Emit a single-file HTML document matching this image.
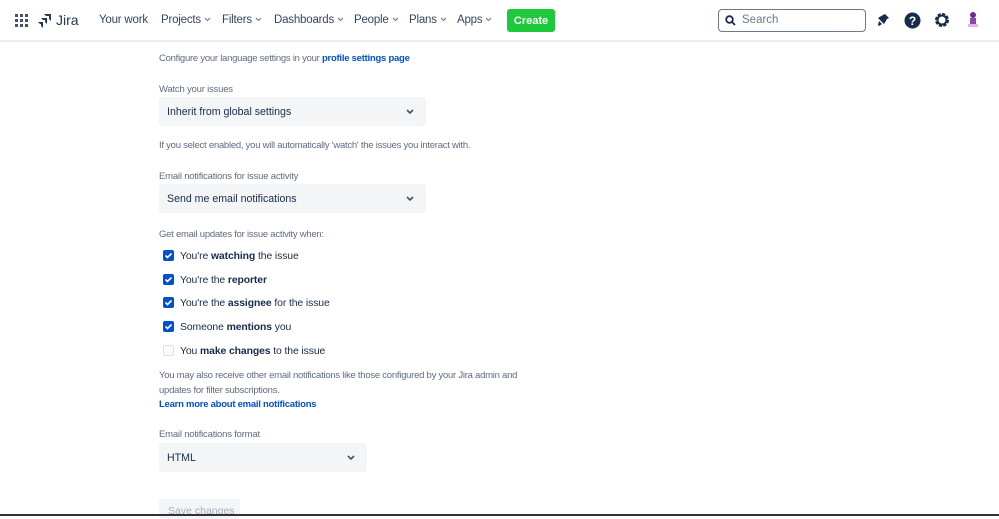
<!DOCTYPE html>
<html><head><style>
*{box-sizing:border-box;margin:0;padding:0}
body{width:999px;height:516px;overflow:hidden;background:#fff;font-family:"Liberation Sans",sans-serif;color:#172b4d;position:relative}
.hdr{position:absolute;left:0;top:0;width:999px;height:42px;border-bottom:2px solid #ebecf0;background:#fff}
.a{position:absolute;white-space:nowrap}
.nav{font-size:11.5px;letter-spacing:-0.2px;color:#344563;top:14px}
.nav svg{margin-left:3px;vertical-align:1px}
.t{position:absolute;font-size:9.5px;letter-spacing:-0.25px;color:#5e6c84;white-space:nowrap}
.lbl{position:absolute;font-size:9.5px;letter-spacing:-0.2px;color:#5e6c84}
.sel{position:absolute;left:159px;width:267px;height:29px;background:#f4f5f7;border-radius:3px;font-size:10.6px;color:#172b4d;padding:9px 8px}
.sel svg{position:absolute;right:12px;top:12px}
.cb{position:absolute;left:163px;width:11px;height:11px;border-radius:2px;background:#0052cc}
.cb svg{position:absolute;left:1px;top:1px}
.cbl{position:absolute;left:180px;font-size:10.4px;letter-spacing:-0.1px;color:#172b4d;white-space:nowrap}
a{color:#0052cc;text-decoration:none;font-weight:bold}
</style></head><body>
<div class="hdr">
<svg class="a" style="left:15px;top:14px" width="14" height="14" viewBox="0 0 14 14" fill="#42526e"><rect x="0" y="0" width="3" height="3"/><rect x="5" y="0" width="3" height="3"/><rect x="10" y="0" width="3" height="3"/><rect x="0" y="5" width="3" height="3"/><rect x="5" y="5" width="3" height="3"/><rect x="10" y="5" width="3" height="3"/><rect x="0" y="10" width="3" height="3"/><rect x="5" y="10" width="3" height="3"/><rect x="10" y="10" width="3" height="3"/></svg>
<svg class="a" style="left:38px;top:13px" width="14" height="15" viewBox="0 0 14 15" fill="#253858"><path d="M13 1H6l2 2h3v3l2 2z"/><path d="M9 5H3l2 2h2v2l2 2z"/><path d="M5 9H0l2 2h1v2l2 2z"/></svg>
<div class="a" style="left:56px;top:12px;font-size:14px;color:#253858">Jira</div>
<div class="a nav" style="left:99px">Your work</div>
<div class="a nav" style="left:161px">Projects<svg width="7" height="5" viewBox="0 0 7 5"><path d="M1 1l2.5 2.5L6 1" stroke="#6b778c" fill="none" stroke-width="1.1"/></svg></div>
<div class="a nav" style="left:222px">Filters<svg width="7" height="5" viewBox="0 0 7 5"><path d="M1 1l2.5 2.5L6 1" stroke="#6b778c" fill="none" stroke-width="1.1"/></svg></div>
<div class="a nav" style="left:274px">Dashboards<svg width="7" height="5" viewBox="0 0 7 5"><path d="M1 1l2.5 2.5L6 1" stroke="#6b778c" fill="none" stroke-width="1.1"/></svg></div>
<div class="a nav" style="left:354px">People<svg width="7" height="5" viewBox="0 0 7 5"><path d="M1 1l2.5 2.5L6 1" stroke="#6b778c" fill="none" stroke-width="1.1"/></svg></div>
<div class="a nav" style="left:409px">Plans<svg width="7" height="5" viewBox="0 0 7 5"><path d="M1 1l2.5 2.5L6 1" stroke="#6b778c" fill="none" stroke-width="1.1"/></svg></div>
<div class="a nav" style="left:457px">Apps<svg width="7" height="5" viewBox="0 0 7 5"><path d="M1 1l2.5 2.5L6 1" stroke="#6b778c" fill="none" stroke-width="1.1"/></svg></div>
<div class="a" style="left:507px;top:9px;width:48px;height:23px;background:#1ec93b;border-radius:3px;color:#fff;font-size:11px;font-weight:bold;display:flex;align-items:center;justify-content:center">Create</div>
<div class="a" style="left:718px;top:9px;width:148px;height:23px;border:1.5px solid #6b778c;border-radius:4px"></div>
<svg class="a" style="left:725px;top:15px" width="11" height="11" viewBox="0 0 11 11" fill="none" stroke="#172b4d" stroke-width="1.8"><circle cx="4.5" cy="4.5" r="3.3"/><path d="M7 7l3 3"/></svg>
<div class="a" style="left:742px;top:14px;font-size:11.5px;color:#6b778c">Search</div>
<svg class="a" style="left:876px;top:13px" width="14" height="14" viewBox="0 0 14 14" fill="#172b4d"><path d="M9 1l4 4-2 1-3 5-6-6 5-3zM3 8l3 3-3 2-1-1z"/></svg>
<svg class="a" style="left:904px;top:12px" width="17" height="17" viewBox="0 0 17 17"><circle cx="8.5" cy="8.5" r="8" fill="#172b4d"/><text x="8.5" y="13" text-anchor="middle" font-size="12" font-weight="bold" fill="#fff" font-family="Liberation Sans">?</text></svg>
<svg class="a" style="left:934px;top:12px" width="16" height="16" viewBox="0 0 16 16"><circle cx="8" cy="8" r="5.5" fill="none" stroke="#172b4d" stroke-width="3" stroke-dasharray="3 1.3"/><circle cx="8" cy="8" r="4.5" fill="none" stroke="#172b4d" stroke-width="2"/></svg>
<svg class="a" style="left:966px;top:11px" width="14" height="18" viewBox="0 0 14 18"><circle cx="7" cy="4" r="3" fill="#6b2d8f"/><rect x="4" y="7" width="6" height="6" fill="#8e44ad"/><rect x="2" y="13" width="10" height="3" fill="#e8b4d8"/></svg>
</div>

<div class="t" style="left:159px;top:53px">Configure your language settings in your <a>profile settings page</a></div>
<div class="lbl" style="left:159px;top:84px">Watch your issues</div>
<div class="sel" style="top:97px">Inherit from global settings<svg width="8" height="6" viewBox="0 0 8 6"><path d="M1 1l3 3 3-3" stroke="#42526e" fill="none" stroke-width="1.6"/></svg></div>
<div class="t" style="left:159px;top:140px">If you select enabled, you will automatically 'watch' the issues you interact with.</div>
<div class="lbl" style="left:159px;top:171px">Email notifications for issue activity</div>
<div class="sel" style="top:184px">Send me email notifications<svg width="8" height="6" viewBox="0 0 8 6"><path d="M1 1l3 3 3-3" stroke="#42526e" fill="none" stroke-width="1.6"/></svg></div>
<div class="t" style="left:159px;top:229px">Get email updates for issue activity when:</div>

<div class="cb" style="top:250px"><svg width="9" height="9" viewBox="0 0 9 9"><path d="M1.5 4.5l2 2 4-4" stroke="#fff" stroke-width="1.6" fill="none"/></svg></div>
<div class="cbl" style="top:251px">You're <b>watching</b> the issue</div>
<div class="cb" style="top:274px"><svg width="9" height="9" viewBox="0 0 9 9"><path d="M1.5 4.5l2 2 4-4" stroke="#fff" stroke-width="1.6" fill="none"/></svg></div>
<div class="cbl" style="top:275px">You're the <b>reporter</b></div>
<div class="cb" style="top:297px"><svg width="9" height="9" viewBox="0 0 9 9"><path d="M1.5 4.5l2 2 4-4" stroke="#fff" stroke-width="1.6" fill="none"/></svg></div>
<div class="cbl" style="top:298px">You're the <b>assignee</b> for the issue</div>
<div class="cb" style="top:321px"><svg width="9" height="9" viewBox="0 0 9 9"><path d="M1.5 4.5l2 2 4-4" stroke="#fff" stroke-width="1.6" fill="none"/></svg></div>
<div class="cbl" style="top:322px">Someone <b>mentions</b> you</div>
<div class="cb" style="top:345px;background:#fafbfc;border:1px solid #dfe1e6"></div>
<div class="cbl" style="top:346px">You <b>make changes</b> to the issue</div>

<div class="t" style="left:159px;top:369px;line-height:14.5px">You may also receive other email notifications like those configured by your Jira admin and<br>updates for filter subscriptions.<br><a>Learn more about email notifications</a></div>

<div class="lbl" style="left:159px;top:429px">Email notifications format</div>
<div class="sel" style="top:443px;width:208px">HTML<svg width="8" height="6" viewBox="0 0 8 6"><path d="M1 1l3 3 3-3" stroke="#42526e" fill="none" stroke-width="1.6"/></svg></div>
<div class="a" style="left:159px;top:499px;width:81px;height:20px;background:#f4f5f7;border-radius:3px;font-size:10.5px;color:#a5adba;padding:6px 9px">Save changes</div>
<div class="a" style="left:0;top:514px;width:999px;height:2px;background:#333"></div>
</body></html>
